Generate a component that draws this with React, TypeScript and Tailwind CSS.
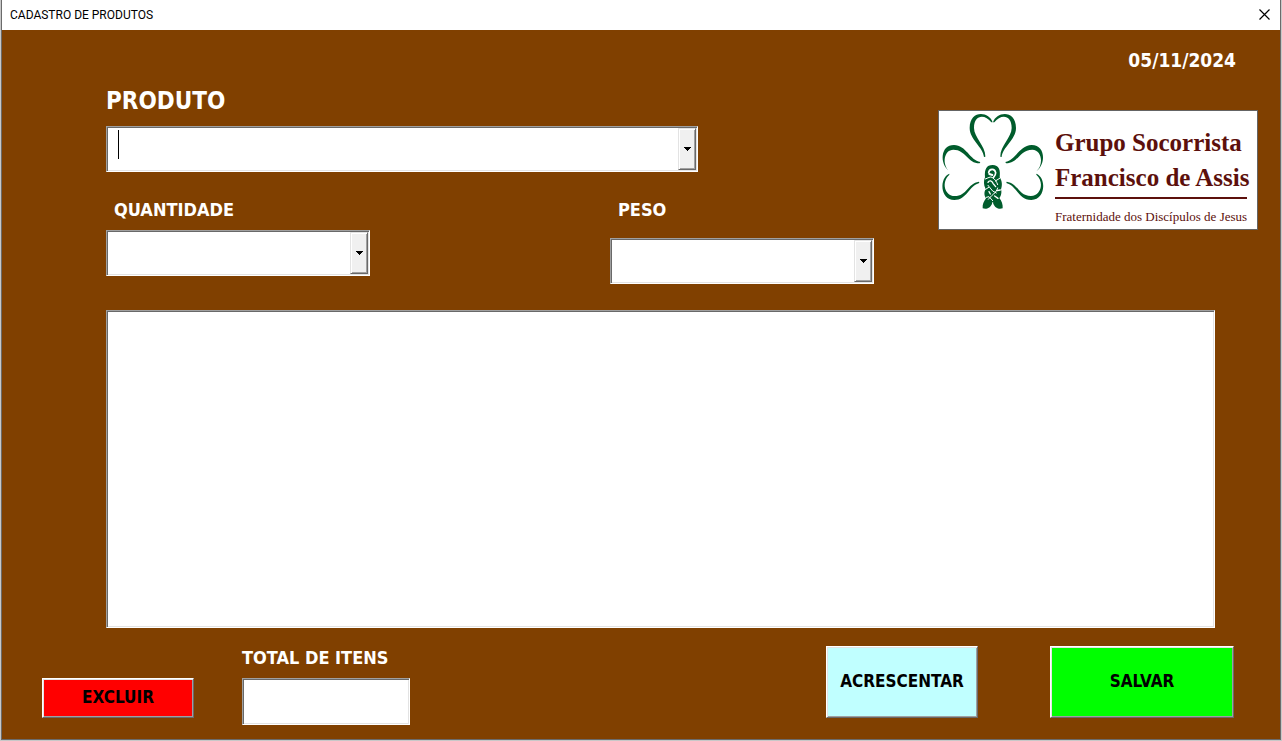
import { useState } from "react";
import type { ReactNode } from "react";

const sunken =
  "border border-t-[#a0a0a0] border-l-[#a0a0a0] border-r-white border-b-white bg-white p-px shadow-[inset_1px_1px_0_#696969,inset_-1px_-1px_0_#e3e3e3]";
const raised =
  "border border-t-white border-l-white border-r-[#696969] border-b-[#696969] shadow-[inset_1px_1px_0_#e3e3e3,inset_-1px_-1px_0_#a0a0a0]";
const label = "text-lg leading-6 font-bold text-white";

function DropArrow() {
  return (
    <svg className="h-1 w-[7px]" viewBox="0 0 7 4" shapeRendering="crispEdges" aria-hidden="true">
      <path d="M0 0h7v1H6v1H5v1H4v1H3V3H2V2H1V1H0z" fill="#000" />
    </svg>
  );
}

const dropFace =
  "flex items-center justify-center border border-t-[#e3e3e3] border-r-[#696969] border-b-[#696969] border-l-[#e3e3e3] bg-[#f0f0f0] shadow-[inset_1px_1px_0_#fff,inset_-1px_-1px_0_#a0a0a0]";

function DropDown({ id, children }: { id: string; children?: ReactNode }) {
  return (
    <div className={`grid h-[46px] w-[264px] grid-cols-[1fr_18px] ${sunken}`}>
      <select id={id} className="col-span-2 col-start-1 row-start-1 appearance-none bg-white px-2 text-lg outline-none">
        <option value=""></option>
        {children}
      </select>
      <span className={`pointer-events-none col-start-2 row-start-1 ${dropFace}`} aria-hidden="true">
        <DropArrow />
      </span>
    </div>
  );
}

function Shamrock() {
  const leaves = (
    <g>
      <path d="M188 67C178 34 119 28 119 84C119 119 160 142 162 171L166 170C167 139 132 112 132 84C132 43 165 42 184 67Z" />
      <path d="M57 213C29 192 30 135 72 135C108 135 120 181 151 186L149 190C112 190 108 149 70 149C42 149 35 192 57 213Z" />
      <path d="M58 221C27 233 30 300 73 300C111 300 117 257 148 249L147 245C112 250 112 288 74 288C44 288 33 246 58 224Z" />
    </g>
  );
  return (
    <svg className="size-[110px] shrink-0" viewBox="27 33 330 330" fill="#005c2c" aria-hidden="true">
      {leaves}
      <g transform="translate(377 0) scale(-1 1)">{leaves}</g>
      <path d="M165 232C163 208 169 195 188 195C207 195 212 211 209 232C217 243 217 257 213 268C216 277 213 289 208 294C215 303 219 313 218 325C207 328 196 326 188 308C180 326 169 328 158 325C157 314 161 305 168 295C161 284 163 274 167 267C160 254 161 242 165 232Z" />
      <g fill="none" stroke="#fff" strokeWidth="3" strokeLinecap="round">
        <path d="M176 218C178 206 194 204 197 218C197 224 194 228 191 232" strokeWidth="5" />
        <path d="M178 222L187 225" strokeWidth="6" />
        <path d="M166 237C174 234 181 229 186 232C195 237 200 245 203 254" />
        <path d="M174 247C178 240 186 242 189 250L197 260" strokeWidth="4" />
        <path d="M174 256L188 273L199 279" />
        <path d="M167 268L176 262M196 243L209 235" />
        <path d="M203 264C201 273 193 281 185 287L175 298" />
        <path d="M177 275L181 282M194 288L204 295M201 272L211 270" strokeWidth="4" />
        <path d="M169 292L177 290L188 302M188 308V316" />
      </g>
    </svg>
  );
}

function Logo() {
  return (
    <div className="flex h-[120px] w-[320px] border border-[#646464] bg-white font-['Liberation_Serif',serif] text-[#5c100c]">
      <Shamrock />
      <div className="ml-1.5 flex flex-col pt-3.5 whitespace-nowrap">
        <p className="text-[25px] leading-[35px] font-bold">Grupo Socorrista</p>
        <p className="text-[25px] leading-[35px] font-bold">Francisco de Assis</p>
        <hr className="mt-0.5 w-48 border-t-2 border-[#5c100c]" />
        <p className="mt-2 text-[13px] leading-5">Fraternidade dos Discípulos de Jesus</p>
      </div>
    </div>
  );
}

export default function App() {
  const [product, setProduct] = useState("");

  return (
    <div className="flex min-h-screen flex-col bg-[#c8c8c8] px-px pb-px font-['DejaVu_Sans_Condensed','DejaVu_Sans',sans-serif]">
      <div className="flex flex-1 flex-col border border-t-0 border-[#6b6b6b] bg-[#804000]">
        <header className="flex h-[30px] items-center justify-between bg-white px-2 font-[Roboto,sans-serif]">
          <h1 className="text-xs text-black">CADASTRO DE PRODUTOS</h1>
          <button type="button" aria-label="Fechar" className="flex h-5 w-4 items-start justify-center pt-1">
            <svg className="size-[11px]" viewBox="0 0 11 11" fill="none" stroke="#000" strokeWidth="1.2" aria-hidden="true">
              <path d="M.5.5l10 10M10.5.5l-10 10" />
            </svg>
          </button>
        </header>

        <main className="flex flex-1 flex-col pb-3.5">
          <div className="flex items-start justify-between pr-[22px] pl-[104px]">
            <div className="w-[768px] pt-[54px]">
              <label htmlFor="produto" className="block text-2xl leading-[34px] font-bold text-white">
                PRODUTO
              </label>
              <div className={`relative mt-2 grid h-[46px] w-[592px] grid-cols-[1fr_18px] ${sunken}`}>
                <input
                  id="produto"
                  value={product}
                  onChange={(e) => setProduct(e.target.value)}
                  className="min-w-0 bg-white px-2.5 text-2xl outline-none"
                />
                <button type="button" aria-label="Abrir lista de produtos" className={dropFace}>
                  <DropArrow />
                </button>
                {product === "" && (
                  <span className="pointer-events-none absolute top-[3px] left-[11px] h-[29px] w-px bg-black" aria-hidden="true" />
                )}
              </div>
              <div className="mt-[26px] flex justify-between">
                <div>
                  <label htmlFor="quantidade" className={`block pl-2 ${label}`}>
                    QUANTIDADE
                  </label>
                  <div className="mt-2">
                    <DropDown id="quantidade" />
                  </div>
                </div>
                <div>
                  <label htmlFor="peso" className={`block pl-2 ${label}`}>
                    PESO
                  </label>
                  <div className="mt-4">
                    <DropDown id="peso" />
                  </div>
                </div>
              </div>
            </div>
            <div className="flex flex-col pt-[18px]">
              <time dateTime="2024-11-05" className="pr-[22px] text-right text-[19px] leading-6 font-bold text-white">
                05/11/2024
              </time>
              <div className="mt-[38px]">
                <Logo />
              </div>
            </div>
          </div>

          <div
            role="listbox"
            aria-label="Itens"
            tabIndex={0}
            className={`mt-[26px] mr-[65px] ml-[104px] min-h-60 flex-1 ${sunken}`}
          />

          <div className="mt-[18px] flex items-start justify-between pr-[46px] pl-10">
            <div className="flex items-start gap-12">
              <button type="button" className={`mt-8 h-10 w-[152px] bg-[#ff0000] text-[17px] font-bold text-black ${raised}`}>
                EXCLUIR
              </button>
              <div>
                <label htmlFor="total" className={`block ${label}`}>
                  TOTAL DE ITENS
                </label>
                <input id="total" readOnly className={`mt-2 block h-[47px] w-[168px] outline-none ${sunken}`} />
              </div>
            </div>
            <div className="flex gap-[72px]">
              <button type="button" className={`h-[72px] w-[152px] bg-[#c0ffff] text-[17px] font-bold text-black ${raised}`}>
                ACRESCENTAR
              </button>
              <button type="button" className={`h-[72px] w-[184px] bg-[#00ff00] text-[17px] font-bold text-black ${raised}`}>
                SALVAR
              </button>
            </div>
          </div>
        </main>
      </div>
    </div>
  );
}
